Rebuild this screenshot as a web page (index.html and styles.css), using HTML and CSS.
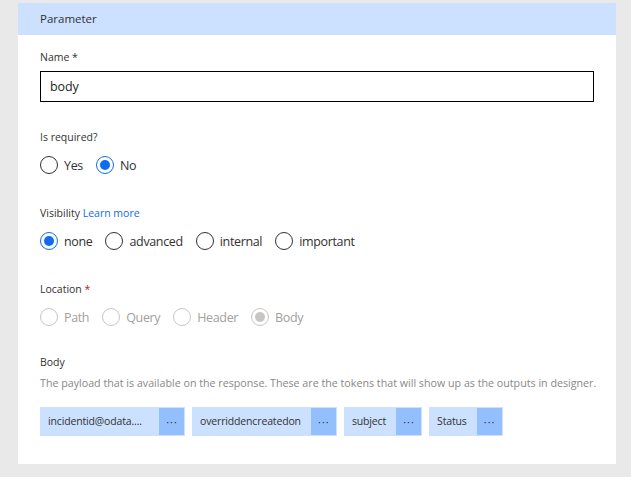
FILE: index.html
```html
<!DOCTYPE html>
<html>
<head>
<meta charset="utf-8">
<link rel="stylesheet" href="styles.css">
</head>
<body>
<div class="card">
  <div class="card-header">Parameter</div>
  <div class="card-body">
    <div class="label">Name *</div>
    <div class="textbox">body</div>

    <div class="label sec">Is required?</div>
    <div class="radios">
      <span class="radio"><span class="circle"></span>Yes</span>
      <span class="radio checked"><span class="circle"></span>No</span>
    </div>

    <div class="label sec">Visibility <a class="link">Learn more</a></div>
    <div class="radios">
      <span class="radio checked"><span class="circle"></span>none</span>
      <span class="radio"><span class="circle"></span>advanced</span>
      <span class="radio"><span class="circle"></span>internal</span>
      <span class="radio"><span class="circle"></span>important</span>
    </div>

    <div class="label sec">Location <span class="req">*</span></div>
    <div class="radios disabled">
      <span class="radio"><span class="circle"></span>Path</span>
      <span class="radio"><span class="circle"></span>Query</span>
      <span class="radio"><span class="circle"></span>Header</span>
      <span class="radio checked"><span class="circle"></span>Body</span>
    </div>

    <div class="label sec2">Body</div>
    <div class="desc">The payload that is available on the response. These are the tokens that will show up as the outputs in designer.</div>

    <div class="tokens">
      <div class="token"><span class="token-text t1">incidentid@odata....</span><span class="token-more">···</span></div>
      <div class="token"><span class="token-text">overriddencreatedon</span><span class="token-more">···</span></div>
      <div class="token"><span class="token-text">subject</span><span class="token-more">···</span></div>
      <div class="token"><span class="token-text">Status</span><span class="token-more">···</span></div>
    </div>
  </div>
</div>
</body>
</html>
```

FILE: styles.css
```css
html, body {
  margin: 0;
  padding: 0;
  background: #e9e9e9;
}
body {
  font-family: "Open Sans", "Noto Sans", sans-serif;
  color: #323130;
  padding: 3px 0 0 18px;
  height: 477px;
  box-sizing: border-box;
  overflow: hidden;
}
.card {
  width: 598px;
  background: #ffffff;
}
.card-header {
  height: 32px;
  line-height: 32px;
  background: #cce1ff;
  padding-left: 22px;
  font-size: 11.5px;
  color: #323130;
}
.card-body {
  padding: 14px 22px 28px 22px;
}
.label {
  font-size: 10.5px;
  line-height: 16px;
  height: 16px;
  color: #323130;
}
.label.sec { margin-top: 27px; }
.label.sec + .radios { margin-top: 10px; }
.radios + .label.sec { margin-top: 30px; }
.label.sec2 { margin-top: 27px; }
.link { color: #0f6cf0; }
.req { color: #a4262c; }
.textbox {
  margin-top: 6px;
  height: 31px;
  box-sizing: border-box;
  border: 1px solid #000;
  padding-left: 9px;
  line-height: 29px;
  font-size: 12.5px;
  letter-spacing: -0.1px;
  color: #201f1e;
}
.radios {
  display: flex;
  height: 20px;
  align-items: center;
  gap: 13px;
}
.radio {
  display: inline-flex;
  align-items: center;
  gap: 6px;
  font-size: 12.5px;
  letter-spacing: -0.35px;
  color: #323130;
}
.circle {
  width: 18px;
  height: 18px;
  box-sizing: border-box;
  border: 1px solid #323130;
  border-radius: 50%;
  position: relative;
}
.checked .circle { border-color: #0f6cf0; }
.checked .circle::after {
  content: "";
  position: absolute;
  left: 3px;
  top: 3px;
  width: 10px;
  height: 10px;
  border-radius: 50%;
  background: #0f6cf0;
}
.disabled .radio { color: #a19f9d; }
.disabled .circle { border-color: #c8c6c4; }
.disabled .checked .circle::after { background: #c8c6c4; }
.desc {
  margin-top: 5px;
  font-size: 10.7px;
  line-height: 16px;
  color: #8a8886;
  white-space: nowrap;
}
.tokens {
  margin-top: 16px;
  display: flex;
  gap: 7px;
}
.token {
  display: flex;
  height: 29px;
  background: #cce1ff;
  box-sizing: border-box;
  padding: 1px;
}
.token-text {
  font-size: 10.5px;
  letter-spacing: -0.15px;
  line-height: 27px;
  padding: 0 10px 0 7px;
  color: #323130;
}
.token-text.t1 { width: 101px; }
.token-more {
  width: 25px;
  background: #94bfff;
  text-align: center;
  font-size: 11px;
  letter-spacing: 1px;
  text-indent: 1px;
  line-height: 27px;
  color: #323130;
}
```
